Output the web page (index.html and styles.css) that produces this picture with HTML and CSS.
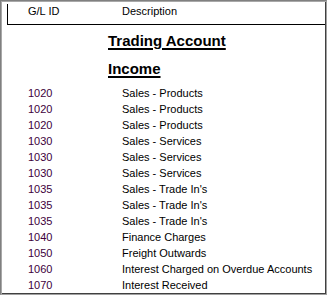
FILE: index.html
```html
<!DOCTYPE html>
<html lang="en">
<head>
    <meta charset="UTF-8">
    <meta name="viewport" content="width=device-width, initial-scale=1.0">
    <title>Trading Account</title>
    <link rel="stylesheet" href="styles.css">
</head>
<body>
    <div class="report">
        <div class="report-head">
            <span class="col-id">G/L ID</span>
            <span class="col-desc">Description</span>
        </div>

        <h1 class="section-title">Trading Account</h1>
        <h2 class="group-title">Income</h2>

        <div class="rows">
            <div class="row"><span class="col-id">1020</span><span class="col-desc">Sales - Products</span></div>
            <div class="row"><span class="col-id">1020</span><span class="col-desc">Sales - Products</span></div>
            <div class="row"><span class="col-id">1020</span><span class="col-desc">Sales - Products</span></div>
            <div class="row"><span class="col-id">1030</span><span class="col-desc">Sales - Services</span></div>
            <div class="row"><span class="col-id">1030</span><span class="col-desc">Sales - Services</span></div>
            <div class="row"><span class="col-id">1030</span><span class="col-desc">Sales - Services</span></div>
            <div class="row"><span class="col-id">1035</span><span class="col-desc">Sales - Trade In's</span></div>
            <div class="row"><span class="col-id">1035</span><span class="col-desc">Sales - Trade In's</span></div>
            <div class="row"><span class="col-id">1035</span><span class="col-desc">Sales - Trade In's</span></div>
            <div class="row"><span class="col-id">1040</span><span class="col-desc">Finance Charges</span></div>
            <div class="row"><span class="col-id">1050</span><span class="col-desc">Freight Outwards</span></div>
            <div class="row"><span class="col-id">1060</span><span class="col-desc">Interest Charged on Overdue Accounts</span></div>
            <div class="row"><span class="col-id">1070</span><span class="col-desc">Interest Received</span></div>
        </div>
    </div>
</body>
</html>
```

FILE: styles.css
```css
* {
    margin: 0;
    padding: 0;
    box-sizing: border-box;
}

body {
    font-family: "Liberation Sans", Arial, sans-serif;
    font-size: 11px;
    color: #000;
    background: #fff;
}

/* sunken report frame */
.report {
    height: 295px;
    overflow: hidden;
    background: #fff;
    border-top: 1px solid #808080;
    border-left: 1px solid #808080;
    border-right: 1px solid #a0a0a0;
    border-bottom: 1px solid #a0a0a0;
    box-shadow: inset 1px 1px #a8a8a8, inset -1px -1px #404040;
}

.report-head {
    display: flex;
    margin: 3px 1px 0 6px;
    height: 21px;
    padding-left: 20px;
    line-height: 15px;
    border-left: 1px solid #000;
    border-bottom: 1px solid #000;
}

.col-id {
    width: 94px;
    flex-shrink: 0;
}

.col-desc {
    white-space: nowrap;
}

.section-title,
.group-title {
    font-size: 15px;
    font-weight: bold;
    line-height: 18px;
    padding-left: 107px;
    text-decoration: underline;
    text-decoration-thickness: 2px;
    text-underline-offset: 2px;
}

.section-title {
    margin-top: 7px;
}

.group-title {
    margin-top: 10px;
}

.rows {
    margin-top: 7px;
}

.row {
    display: flex;
    padding-left: 27px;
    line-height: 16px;
}

.row .col-id {
    color: #40003c;
}
```
